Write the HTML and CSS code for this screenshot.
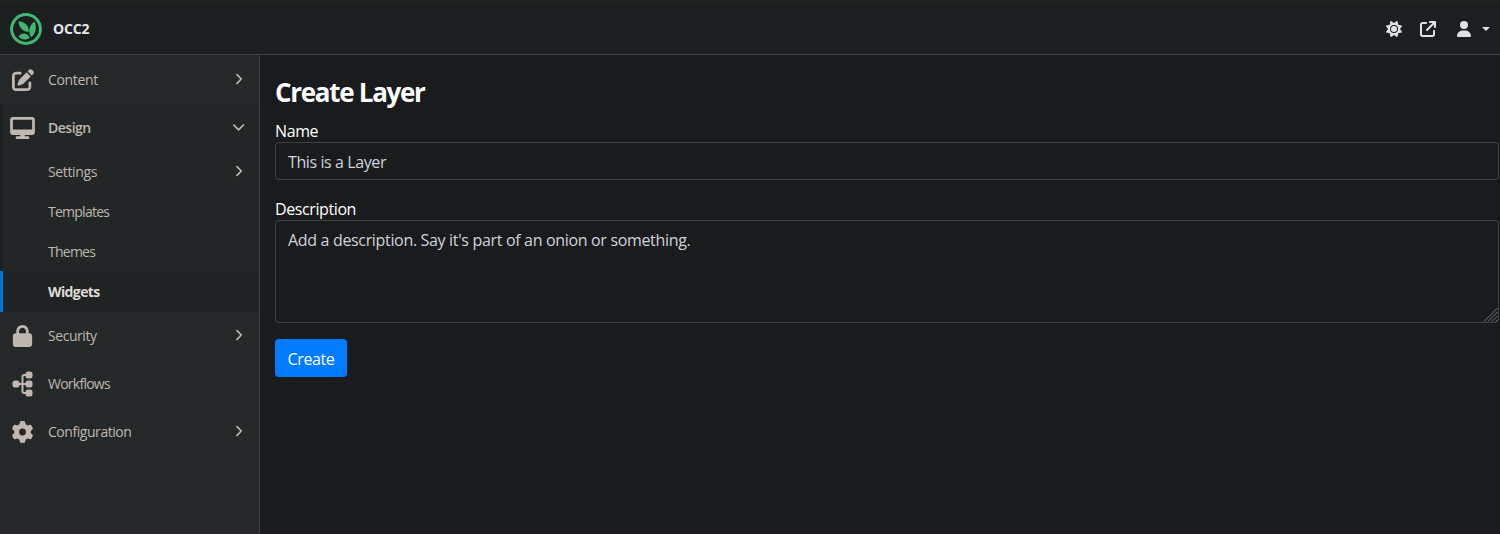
FILE: index.html
```html
<!DOCTYPE html>
<html lang="en">
<head>
<meta charset="utf-8">
<title>Create Layer</title>
<link rel="stylesheet" href="styles.css">
</head>
<body>
<header class="topbar">
  <a class="brand">
    <svg class="logo" viewBox="0 0 32 32"><circle cx="16" cy="16" r="14.4" fill="none" stroke="#41b670" stroke-width="3"/><path fill="#41b670" d="M8.500 8.200C15 8.600 19.500 13 18.700 19 12.500 18.500 9 14.500 8.500 8.200zM24.500 8.500C27 14.500 26 20.500 21.200 24.300 17.800 18.500 19 12.500 24.500 8.500zM8.500 23.300C11.800 19.500 16.500 19.300 20 24.700 16 27.500 11.500 27 8.500 23.300z"/></svg>
    <span class="brand-name">OCC2</span>
  </a>
  <nav class="tools">
    <svg class="tool" viewBox="0 0 512 512"><path d="M361.500 1.200c5 2.100 8.600 6.600 9.600 11.900L391 121l107.900 19.800c5.300 1 9.800 4.600 11.900 9.600s1.500 10.700-1.600 15.200L446.900 256l62.300 90.300c3.100 4.500 3.700 10.200 1.600 15.200s-6.600 8.600-11.900 9.600L391 391 371.100 498.900c-1 5.300-4.600 9.800-9.600 11.900s-10.700 1.500-15.200-1.600L256 446.900l-90.300 62.300c-4.500 3.100-10.200 3.700-15.200 1.600s-8.600-6.600-9.600-11.900L121 391 13.100 371.100c-5.300-1-9.800-4.600-11.900-9.600s-1.500-10.700 1.600-15.200L65.100 256 2.800 165.700c-3.100-4.500-3.700-10.200-1.600-15.200s6.600-8.600 11.900-9.600L121 121 140.900 13.100c1-5.300 4.600-9.800 9.600-11.900s10.700-1.500 15.200 1.600L256 65.100 346.300 2.800c4.500-3.100 10.200-3.700 15.200-1.600zM160 256a96 96 0 1 1 192 0 96 96 0 1 1-192 0zm224 0a128 128 0 1 0-256 0 128 128 0 1 0 256 0z"/></svg>
    <svg class="tool" viewBox="0 0 512 512"><path d="M320 0c-17.700 0-32 14.300-32 32s14.300 32 32 32h82.700L201.400 265.400c-12.500 12.500-12.500 32.800 0 45.300s32.800 12.500 45.300 0L448 109.300V192c0 17.700 14.300 32 32 32s32-14.300 32-32V32c0-17.700-14.300-32-32-32H320zM80 32C35.800 32 0 67.800 0 112V432c0 44.200 35.800 80 80 80H400c44.200 0 80-35.800 80-80V320c0-17.700-14.300-32-32-32s-32 14.300-32 32V432c0 8.800-7.200 16-16 16H80c-8.800 0-16-7.200-16-16V112c0-8.800 7.200-16 16-16H192c17.700 0 32-14.300 32-32s-14.300-32-32-32H80z"/></svg>
    <span class="account">
      <svg class="user" viewBox="0 0 448 512"><path d="M224 256A128 128 0 1 0 224 0a128 128 0 1 0 0 256zm-45.700 48C79.800 304 0 383.800 0 482.300C0 498.700 13.300 512 29.700 512H418.300c16.400 0 29.700-13.300 29.700-29.700C448 383.800 368.200 304 269.700 304H178.300z"/></svg>
      <i class="caret"></i>
    </span>
  </nav>
</header>
<div class="shell">
  <aside class="sidebar">
    <a class="item"><span class="icon"><svg width="22" height="22" viewBox="0 0 512 512"><path d="M471.600 21.700c-21.900-21.900-57.300-21.900-79.200 0L362.300 51.700l97.900 97.900 30.100-30.100c21.900-21.900 21.900-57.300 0-79.200L471.600 21.700zm-299.200 220c-6.100 6.100-10.800 13.600-13.500 21.900l-29.600 88.800c-2.900 8.600-.6 18.100 5.800 24.600s15.900 8.700 24.600 5.800l88.800-29.600c8.200-2.700 15.700-7.400 21.900-13.500L437.700 172.300 339.700 74.300 172.400 241.700zM96 64C43 64 0 107 0 160V416c0 53 43 96 96 96H352c53 0 96-43 96-96V320c0-17.700-14.300-32-32-32s-32 14.300-32 32v96c0 17.700-14.300 32-32 32H96c-17.700 0-32-14.300-32-32V160c0-17.700 14.300-32 32-32h96c17.700 0 32-14.300 32-32s-14.300-32-32-32H96z"/></svg></span><span class="label">Content</span><svg class="chev" viewBox="0 0 12 12"><path d="M4 1.700 8.300 6 4 10.300"/></svg></a>
    <div class="group">
      <a class="item open"><span class="icon"><svg width="25" height="22" viewBox="0 0 576 512"><path d="M64 0C28.700 0 0 28.700 0 64V352c0 35.300 28.700 64 64 64H240l-10.700 32H160c-17.700 0-32 14.300-32 32s14.300 32 32 32H416c17.700 0 32-14.300 32-32s-14.300-32-32-32H346.700L336 416H512c35.300 0 64-28.700 64-64V64c0-35.300-28.700-64-64-64H64zM512 64V288H64V64H512z"/></svg></span><span class="label">Design</span><svg class="chev" viewBox="0 0 12 12"><path d="M.8 4 5.600 8.800 10.400 4"/></svg></a>
      <a class="item sub"><span class="label">Settings</span><svg class="chev" viewBox="0 0 12 12"><path d="M4 1.700 8.300 6 4 10.300"/></svg></a>
      <a class="item sub"><span class="label tight">Templates</span></a>
      <a class="item sub"><span class="label tight">Themes</span></a>
      <a class="item sub active"><span class="label">Widgets</span></a>
    </div>
    <a class="item"><span class="icon"><svg width="21" height="22" viewBox="0 0 448 512"><path d="M144 144v48H304V144c0-44.200-35.800-80-80-80s-80 35.800-80 80zM80 192V144C80 64.500 144.500 0 224 0s144 64.500 144 144v48h16c35.300 0 64 28.700 64 64V448c0 35.300-28.700 64-64 64H64c-35.300 0-64-28.700-64-64V256c0-35.300 28.700-64 64-64H80z"/></svg></span><span class="label snug">Security</span><svg class="chev" viewBox="0 0 12 12"><path d="M4 1.700 8.300 6 4 10.300"/></svg></a>
    <a class="item"><span class="icon"><svg width="21" height="26" viewBox="0 0 21 26"><rect x="0.500" y="9.500" width="7" height="7" rx="2.500"/><rect x="13.500" y="0.500" width="7" height="7" rx="2.500"/><rect x="13.500" y="9.500" width="7" height="7" rx="2.500"/><rect x="13.500" y="18.500" width="7" height="7" rx="2.500"/><path class="wire" d="M6 13h9M15 4h-2.800q-1.700 0-1.700 1.700v14.600q0 1.700 1.700 1.700H15"/></svg></span><span class="label tight">Workflows</span></a>
    <a class="item"><span class="icon"><svg width="23" height="22" viewBox="0 0 512 512"><path d="M495.900 166.600c3.200 8.700 .5 18.400-6.400 24.600l-43.300 39.400c1.100 8.300 1.700 16.800 1.700 25.400s-.6 17.100-1.700 25.400l43.300 39.400c6.900 6.200 9.600 15.900 6.400 24.600c-4.400 11.900-9.700 23.300-15.800 34.300l-4.700 8.100c-6.600 11-14 21.400-22.100 31.200c-5.900 7.200-15.700 9.600-24.500 6.800l-55.700-17.700c-13.400 10.300-28.200 18.900-44 25.400l-12.500 57.100c-2 9.100-9 16.300-18.200 17.800c-13.800 2.300-28 3.500-42.500 3.500s-28.700-1.200-42.500-3.500c-9.200-1.500-16.200-8.700-18.200-17.800l-12.500-57.100c-15.800-6.500-30.600-15.100-44-25.400L83.100 425.900c-8.800 2.800-18.600 .3-24.500-6.800c-8.100-9.800-15.500-20.200-22.100-31.200l-4.700-8.100c-6.100-11-11.400-22.400-15.800-34.300c-3.200-8.700-.5-18.400 6.400-24.600l43.300-39.400C64.600 273.100 64 264.600 64 256s.6-17.100 1.700-25.400L22.400 191.200c-6.900-6.200-9.600-15.900-6.400-24.600c4.400-11.900 9.700-23.300 15.800-34.300l4.700-8.100c6.600-11 14-21.400 22.100-31.200c5.900-7.200 15.700-9.600 24.500-6.800l55.700 17.700c13.400-10.300 28.200-18.900 44-25.400l12.500-57.100c2-9.100 9-16.300 18.200-17.800C227.300 1.200 241.500 0 256 0s28.700 1.200 42.500 3.500c9.200 1.500 16.200 8.700 18.200 17.800l12.500 57.100c15.800 6.500 30.600 15.100 44 25.400l55.700-17.700c8.800-2.800 18.600-.3 24.500 6.800c8.100 9.800 15.500 20.200 22.100 31.200l4.700 8.100c6.100 11 11.400 22.400 15.800 34.300zM256 336a80 80 0 1 0 0-160 80 80 0 1 0 0 160z"/></svg></span><span class="label snug">Configuration</span><svg class="chev" viewBox="0 0 12 12"><path d="M4 1.700 8.300 6 4 10.300"/></svg></a>
  </aside>
  <main class="main">
    <h1 class="title">Create Layer</h1>
    <div class="field"><div class="field-label">Name</div><div class="control">This is a Layer</div></div>
    <div class="field last"><div class="field-label">Description</div><div class="control area">Add a description. Say it's part of an onion or something.<svg class="grip" viewBox="0 0 15 15"><path d="M1 14.500 14.500 1M5 14.500 14.500 5M9 14.500 14.500 9M12.500 14.500l2-2"/></svg></div></div>
    <button class="create">Create</button>
  </main>
</div>
</body>
</html>
```

FILE: styles.css
```css
* { box-sizing: border-box; }
body {
  margin: 0;
  height: 534px;
  display: flex;
  flex-direction: column;
  overflow: hidden;
  background: #1a1b1d;
  color: #fff;
  font: 16px/24px "Open Sans", "Noto Sans", sans-serif;
}
.topbar {
  height: 55px;
  flex: none;
  display: flex;
  align-items: center;
  justify-content: space-between;
  padding: 1px 10px 0;
  border-top: 3px solid #212121;
  border-bottom: 1px solid #3b3f40;
  background: #1b1f1f;
}
.brand { display: flex; align-items: center; gap: 11px; }
.logo { width: 32px; height: 32px; }
.brand-name { font-size: 14px; font-weight: 700; letter-spacing: -0.2px; color: #e3e6e8; }
.tools { display: flex; align-items: center; gap: 18px; fill: #dee2e6; }
.tool { width: 16px; height: 16px; }
.account { display: flex; align-items: center; gap: 11px; margin-left: 3px; }
.user { width: 14px; height: 16px; }
.caret { border: 4px solid transparent; border-top-color: #dee2e6; border-bottom: 0; }
.shell { flex: 1; display: flex; min-height: 0; }
.sidebar {
  width: 260px;
  flex: none;
  padding-top: 1px;
  border-right: 1px solid #3f4344;
  background: #242829;
  fill: #bfb7b0;
}
.item {
  height: 48px;
  display: flex;
  align-items: center;
  padding: 0 14px 0 9px;
  font-size: 14px;
  line-height: 20px;
  letter-spacing: -0.35px;
  color: #bfb7b0;
}
.group { background: #222627; box-shadow: inset 3px 0 #1c1f20; }
.icon { width: 27px; display: flex; justify-content: center; }
.label { flex: 1; padding-left: 12px; }
.snug { letter-spacing: -0.45px; }
.tight { letter-spacing: -0.75px; }
.open { font-weight: 600; letter-spacing: -0.5px; }
.sub { height: 40px; padding-left: 36px; }
.active { height: 41px; margin-top: -1px; padding: 1px 0 0 33px; border-left: 3px solid #0078d4; background: #1f2324; color: #dedad6; font-weight: 700; letter-spacing: -0.6px; }
.chev { width: 12px; height: 12px; margin-top: -2px; fill: none; stroke: #bfb7b0; stroke-width: 1.700; stroke-linecap: round; stroke-linejoin: round; }
.wire { fill: none; stroke: #bfb7b0; stroke-width: 2; }
.main { flex: 1; padding: 19px 1px 0 15px; }
.title { margin: 0 0 9px; font-size: 26px; line-height: 36px; font-weight: 700; letter-spacing: -1.300px; }
.field { margin-bottom: 17px; }
.last { margin-bottom: 16px; }
.field-label { height: 23px; line-height: 25px; letter-spacing: -0.4px; }
.control {
  position: relative;
  height: 38px;
  padding: 7px 12px;
  border: 1px solid #3e4143;
  border-radius: 4px;
  color: #ced4da;
  line-height: 25px;
  letter-spacing: -0.4px;
}
.area { height: 103px; letter-spacing: -0.33px; }
.grip { position: absolute; right: 0; bottom: 0; width: 15px; height: 15px; fill: none; stroke: #77797b; stroke-width: 1; }
.create {
  display: block;
  width: 72px;
  height: 38px;
  padding: 2px 0 0;
  border: 0;
  border-radius: 4px;
  background: #007bff;
  color: #fff;
  font: inherit;
  letter-spacing: -0.4px;
}
```
